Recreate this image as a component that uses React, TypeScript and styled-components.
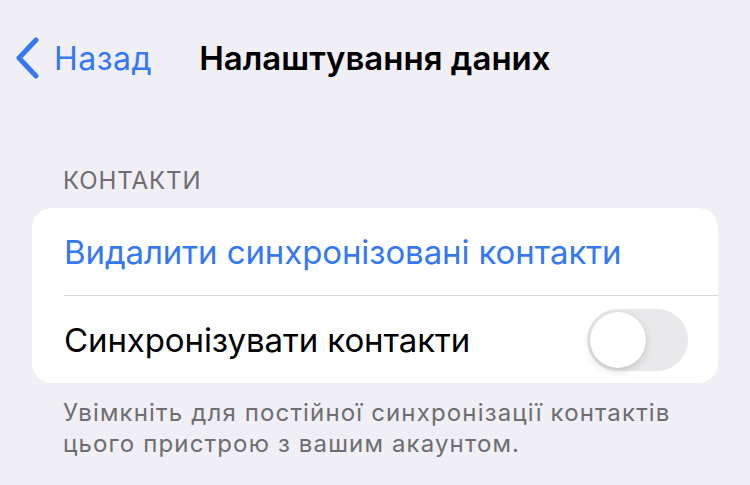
import styled, { createGlobalStyle } from 'styled-components';

const Global = createGlobalStyle`
  html, body {
    margin: 0;
    padding: 0;
    background: #f0eff5;
  }
  body {
    font-family: Inter, Roboto, "Noto Sans", sans-serif;
  }
`;

const Screen = styled.div`
  width: 750px;
  height: 485px;
  overflow: hidden;
  background: #f0eff5;
  display: flex;
  flex-direction: column;
`;

const NavBar = styled.div`
  height: 80px;
  padding-top: 36px;
  box-sizing: border-box;
  display: flex;
  align-items: center;
  padding-left: 14px;
`;

const BackButton = styled.div`
  display: flex;
  align-items: center;
  gap: 14px;
  color: #3478f6;
  font-size: 32px;
  letter-spacing: 0.5px;
`;

const Title = styled.div`
  margin-left: 47px;
  font-size: 33px;
  font-weight: 600;
  color: #000;
  letter-spacing: 0;
`;

const Section = styled.div`
  padding: 0 32px;
  margin-top: 86px;
`;

const SectionHeader = styled.div`
  padding-left: 31px;
  font-size: 24px;
  letter-spacing: 0.9px;
  color: #6d6d72;
  margin-bottom: 13px;
`;

const Card = styled.div`
  background: #fff;
  border-radius: 20px;
  overflow: hidden;
`;

const Row = styled.div<{ $divider?: boolean }>`
  height: 87px;
  margin-left: 32px;
  padding-right: 30px;
  display: flex;
  align-items: center;
  justify-content: space-between;
  border-bottom: ${(p) => (p.$divider ? '1px solid #d8d8dc' : 'none')};
`;

const RowLabel = styled.div<{ $action?: boolean }>`
  font-size: 33px;
  color: ${(p) => (p.$action ? '#3478f6' : '#000')};
  letter-spacing: -0.1px;
`;

const Toggle = styled.div`
  width: 101px;
  height: 62px;
  border-radius: 31px;
  background: #e9e9eb;
  position: relative;
`;

const Knob = styled.div`
  position: absolute;
  left: 3px;
  top: 3px;
  width: 56px;
  height: 56px;
  border-radius: 50%;
  background: #fff;
  box-shadow: 0 3px 8px rgba(0, 0, 0, 0.15), 0 0 1px rgba(0, 0, 0, 0.12);
`;

const Footer = styled.div`
  padding: 14px 32px 0 31px;
  font-size: 24px;
  letter-spacing: 1.15px;
  line-height: 31px;
  color: #6d6d72;
`;

const Chevron = () => (
  <svg width="26" height="42" viewBox="0 0 26 42">
    <path d="M22 3 L5 21 L22 39" fill="none" stroke="#3478f6" strokeWidth="5" strokeLinecap="round" strokeLinejoin="round" />
  </svg>
);

export default function App() {
  return (
    <Screen>
      <Global />
      <NavBar>
        <BackButton>
          <Chevron />
          Назад
        </BackButton>
        <Title>Налаштування даних</Title>
      </NavBar>
      <Section>
        <SectionHeader>КОНТАКТИ</SectionHeader>
        <Card>
          <Row $divider>
            <RowLabel $action>Видалити синхронізовані контакти</RowLabel>
          </Row>
          <Row>
            <RowLabel>Синхронізувати контакти</RowLabel>
            <Toggle>
              <Knob />
            </Toggle>
          </Row>
        </Card>
        <Footer>
          Увімкніть для постійної синхронізації контактів
          <br />
          цього пристрою з вашим акаунтом.
        </Footer>
      </Section>
    </Screen>
  );
}
